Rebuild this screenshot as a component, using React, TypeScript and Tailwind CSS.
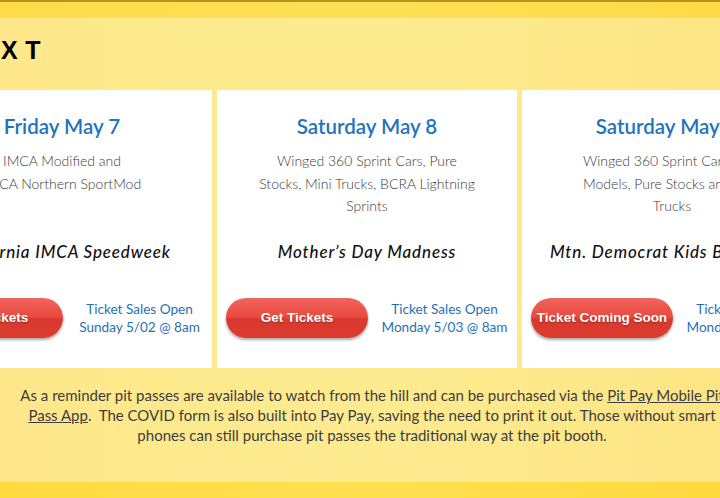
const events = [
  {
    title: "Friday May 7",
    lines: ["IMCA Modified and", "IMCA Northern SportMod"],
    name: "California IMCA Speedweek",
    button: "Get Tickets",
    sales: ["Ticket Sales Open", "Sunday 5/02 @ 8am"],
  },
  {
    title: "Saturday May 8",
    lines: ["Winged 360 Sprint Cars, Pure", "Stocks, Mini Trucks, BCRA Lightning", "Sprints"],
    name: "Mother’s Day Madness",
    button: "Get Tickets",
    sales: ["Ticket Sales Open", "Monday 5/03 @ 8am"],
  },
  {
    title: "Saturday May 15",
    lines: ["Winged 360 Sprint Cars, Late", "Models, Pure Stocks and Mini", "Trucks"],
    name: "Mtn. Democrat Kids Bike Night",
    button: "Ticket Coming Soon",
    sales: ["Ticket Sales Open", "Monday 5/10 @ 8am"],
  },
];

function EventCard({ ev }: { ev: (typeof events)[number] }) {
  return (
    <div className="w-[300px] h-[278px] shrink-0 bg-white flex flex-col items-center pt-[22px]">
      <h3 className="text-[20.5px] leading-[28px] font-semibold text-[#1f74bd]">{ev.title}</h3>
      <p className="mt-[10px] w-[240px] text-center text-[14px] leading-[22.5px] font-light text-[#3a3a3a]">
        {ev.lines.map((l, i) => (
          <span key={i} className="block whitespace-nowrap">{l}</span>
        ))}
      </p>
      <div className="flex-1" />
      <p className="text-[17px] leading-[24px] italic font-medium tracking-[0.05em] text-[#111] whitespace-nowrap">
        {ev.name}
      </p>
      <div className="w-full flex items-center pl-[9px] mt-[34px] mb-[30px]">
        <button className="w-[142px] h-[40px] shrink-0 rounded-full bg-[linear-gradient(#f1655d_0%,#e9493f_48%,#d8382d_52%,#dc3b30_100%)] shadow-[0_2px_3px_rgba(0,0,0,0.35)] text-white font-bold text-[13.5px] [font-family:'Liberation_Sans',Arial,sans-serif] [text-shadow:0_1px_1px_rgba(0,0,0,0.3)] whitespace-nowrap">
          {ev.button}
        </button>
        <div className="flex-1 pl-[4px] text-center text-[13.6px] leading-[18px] text-[#1f72b8]">
          <div>{ev.sales[0]}</div>
          <div>{ev.sales[1]}</div>
        </div>
      </div>
    </div>
  );
}

export default function App() {
  return (
    <div className="w-[720px] h-[498px] overflow-hidden flex flex-col bg-[#fde98b] [font-family:Lato,'Open_Sans',sans-serif]">
      <div className="h-[2px] bg-[#b8921f] shrink-0" />
      <div className="h-[16px] shrink-0 bg-[linear-gradient(90deg,#ffdc48,#ffe055,#ffdb46)]" />
      <div className="flex-1 flex flex-col bg-[linear-gradient(90deg,#fde78a,#feeb90_50%,#fde585)]">
        <h2 className="mt-[17px] -ml-[150px] w-[198px] text-right text-[25px] leading-[30px] font-bold tracking-[0.3em] text-black [font-family:'Liberation_Sans',Arial,sans-serif]">
          UP NEXT
        </h2>
        <div className="mt-[25px] -ml-[88px] flex gap-[5px]">
          {events.map((ev, i) => (
            <EventCard key={i} ev={ev} />
          ))}
        </div>
        <div className="-ml-[88px] w-[920px] flex justify-center">
          <p className="mt-[17px] text-center text-[15px] leading-[20px] text-[#3d3d3d] whitespace-nowrap">
            As a reminder pit passes are available to watch from the hill and can be purchased via the{" "}
            <span className="underline">Pit Pay Mobile Pit</span>
            <br />
            <span className="underline">Pass App</span>.&nbsp; The COVID form is also built into Pay Pay, saving the need to print it out. Those without smart
            <br />
            phones can still purchase pit passes the traditional way at the pit booth.
          </p>
        </div>
        <div className="flex-1" />
      </div>
      <div className="h-[16px] shrink-0 bg-[linear-gradient(90deg,#ffdb40,#ffe050,#ffda3e)]" />
    </div>
  );
}
